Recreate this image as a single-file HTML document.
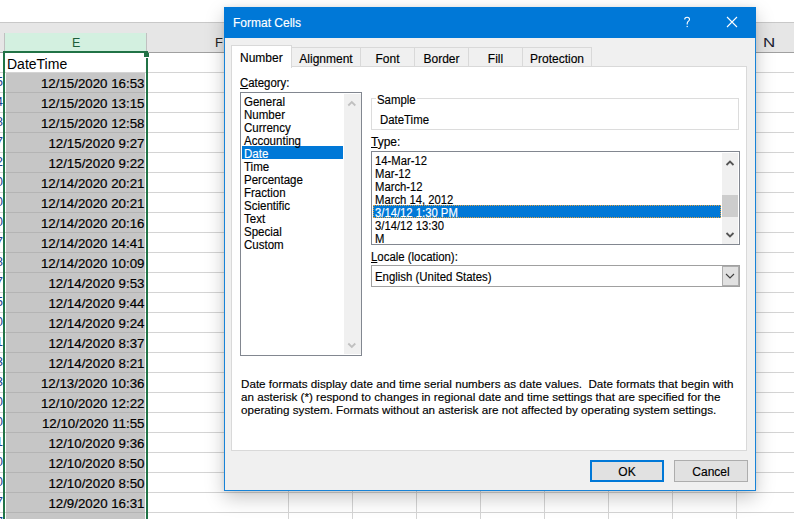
<!DOCTYPE html>
<html><head><meta charset="utf-8">
<style>
*{margin:0;padding:0;box-sizing:border-box}
html,body{width:794px;height:519px;overflow:hidden;background:#fff;font-family:"Liberation Sans",sans-serif;position:relative}
.a{position:absolute}
.hl{position:absolute;left:0;width:794px;height:1px;background:#d4d4d4}
.vl{position:absolute;top:52px;height:467px;width:1px;background:#d4d4d4}
.cell{position:absolute;left:6px;width:139px;height:19px;background:#c6c6c6}
.dt{position:absolute;right:649.5px;font-size:13.3px;color:#000;-webkit-text-stroke:0.2px #000;white-space:nowrap;line-height:15px}
.dd{position:absolute;font-size:13px;color:#1a3f8f;white-space:nowrap;right:791px;line-height:15px}
.tab{position:absolute;top:47px;height:20px;background:#f0f0f0;border:1px solid #d9d9d9;font-size:12px;line-height:22px;text-align:center;color:#000;-webkit-text-stroke:0.15px #000}
.sx{transform:scaleX(.95);transform-origin:0 0}
.ui{font-size:12px;color:#000;-webkit-text-stroke:0.15px currentColor;white-space:nowrap;line-height:13px}
</style></head><body>
<!-- top ribbon area -->
<div class="a" style="left:0;top:22px;width:794px;height:1px;background:#c8c8c8"></div>
<div class="a" style="left:0;top:23px;width:794px;height:29px;background:#e6e6e6"></div>
<div class="a" style="left:5px;top:33px;width:141px;height:18px;background:#d3f0e0"></div>
<div class="a" style="left:4px;top:33px;width:1px;height:18px;background:#c0c0c0"></div>
<div class="a" style="left:146px;top:33px;width:1px;height:18px;background:#c0c0c0"></div>
<div class="a" style="left:0;top:52px;width:794px;height:1px;background:#a0a0a0"></div>
<div class="a" style="left:72px;top:36px;font-size:12.5px;color:#1d5e3a;line-height:15px">E</div>
<div class="a" style="left:215px;top:35px;font-size:13px;color:#222;line-height:15px">F</div>
<div class="a" style="left:763px;top:35px;font-size:13.5px;color:#1c1c30;line-height:15px;transform:scaleX(1.25);transform-origin:0 0">N</div>
<!-- grid -->
<div class="hl" style="top:72px"></div>
<div class="hl" style="top:92px"></div>
<div class="hl" style="top:112px"></div>
<div class="hl" style="top:132px"></div>
<div class="hl" style="top:152px"></div>
<div class="hl" style="top:172px"></div>
<div class="hl" style="top:192px"></div>
<div class="hl" style="top:212px"></div>
<div class="hl" style="top:232px"></div>
<div class="hl" style="top:252px"></div>
<div class="hl" style="top:272px"></div>
<div class="hl" style="top:292px"></div>
<div class="hl" style="top:312px"></div>
<div class="hl" style="top:332px"></div>
<div class="hl" style="top:352px"></div>
<div class="hl" style="top:372px"></div>
<div class="hl" style="top:392px"></div>
<div class="hl" style="top:412px"></div>
<div class="hl" style="top:432px"></div>
<div class="hl" style="top:452px"></div>
<div class="hl" style="top:472px"></div>
<div class="hl" style="top:492px"></div>
<div class="hl" style="top:512px"></div>
<div class="vl" style="left:288px"></div>
<div class="vl" style="left:352px"></div>
<div class="vl" style="left:416px"></div>
<div class="vl" style="left:480px"></div>
<div class="vl" style="left:544px"></div>
<div class="vl" style="left:608px"></div>
<div class="vl" style="left:672px"></div>
<div class="vl" style="left:736px"></div>
<div class="cell" style="top:73px"></div><div class="a" style="left:6px;width:139px;height:1px;background:#b4b4b4;top:92px"></div><div class="dt" style="top:76px">12/15/2020 16:53</div><div class="dd" style="top:74px">5</div>
<div class="cell" style="top:93px"></div><div class="a" style="left:6px;width:139px;height:1px;background:#b4b4b4;top:112px"></div><div class="dt" style="top:96px">12/15/2020 13:15</div><div class="dd" style="top:94px">4</div>
<div class="cell" style="top:113px"></div><div class="a" style="left:6px;width:139px;height:1px;background:#b4b4b4;top:132px"></div><div class="dt" style="top:116px">12/15/2020 12:58</div><div class="dd" style="top:114px">8</div>
<div class="cell" style="top:133px"></div><div class="a" style="left:6px;width:139px;height:1px;background:#b4b4b4;top:152px"></div><div class="dt" style="top:136px">12/15/2020 9:27</div><div class="dd" style="top:134px">7</div>
<div class="cell" style="top:153px"></div><div class="a" style="left:6px;width:139px;height:1px;background:#b4b4b4;top:172px"></div><div class="dt" style="top:156px">12/15/2020 9:22</div><div class="dd" style="top:154px">2</div>
<div class="cell" style="top:173px"></div><div class="a" style="left:6px;width:139px;height:1px;background:#b4b4b4;top:192px"></div><div class="dt" style="top:176px">12/14/2020 20:21</div><div class="dd" style="top:174px">0</div>
<div class="cell" style="top:193px"></div><div class="a" style="left:6px;width:139px;height:1px;background:#b4b4b4;top:212px"></div><div class="dt" style="top:196px">12/14/2020 20:21</div><div class="dd" style="top:194px">0</div>
<div class="cell" style="top:213px"></div><div class="a" style="left:6px;width:139px;height:1px;background:#b4b4b4;top:232px"></div><div class="dt" style="top:216px">12/14/2020 20:16</div><div class="dd" style="top:214px">0</div>
<div class="cell" style="top:233px"></div><div class="a" style="left:6px;width:139px;height:1px;background:#b4b4b4;top:252px"></div><div class="dt" style="top:236px">12/14/2020 14:41</div><div class="dd" style="top:234px">7</div>
<div class="cell" style="top:253px"></div><div class="a" style="left:6px;width:139px;height:1px;background:#b4b4b4;top:272px"></div><div class="dt" style="top:256px">12/14/2020 10:09</div><div class="dd" style="top:254px">8</div>
<div class="cell" style="top:273px"></div><div class="a" style="left:6px;width:139px;height:1px;background:#b4b4b4;top:292px"></div><div class="dt" style="top:276px">12/14/2020 9:53</div><div class="dd" style="top:274px">7</div>
<div class="cell" style="top:293px"></div><div class="a" style="left:6px;width:139px;height:1px;background:#b4b4b4;top:312px"></div><div class="dt" style="top:296px">12/14/2020 9:44</div><div class="dd" style="top:294px">5</div>
<div class="cell" style="top:313px"></div><div class="a" style="left:6px;width:139px;height:1px;background:#b4b4b4;top:332px"></div><div class="dt" style="top:316px">12/14/2020 9:24</div><div class="dd" style="top:314px">0</div>
<div class="cell" style="top:333px"></div><div class="a" style="left:6px;width:139px;height:1px;background:#b4b4b4;top:352px"></div><div class="dt" style="top:336px">12/14/2020 8:37</div><div class="dd" style="top:334px">1</div>
<div class="cell" style="top:353px"></div><div class="a" style="left:6px;width:139px;height:1px;background:#b4b4b4;top:372px"></div><div class="dt" style="top:356px">12/14/2020 8:21</div><div class="dd" style="top:354px">3</div>
<div class="cell" style="top:373px"></div><div class="a" style="left:6px;width:139px;height:1px;background:#b4b4b4;top:392px"></div><div class="dt" style="top:376px">12/13/2020 10:36</div><div class="dd" style="top:374px">3</div>
<div class="cell" style="top:393px"></div><div class="a" style="left:6px;width:139px;height:1px;background:#b4b4b4;top:412px"></div><div class="dt" style="top:396px">12/10/2020 12:22</div><div class="dd" style="top:394px">0</div>
<div class="cell" style="top:413px"></div><div class="a" style="left:6px;width:139px;height:1px;background:#b4b4b4;top:432px"></div><div class="dt" style="top:416px">12/10/2020 11:55</div><div class="dd" style="top:414px">0</div>
<div class="cell" style="top:433px"></div><div class="a" style="left:6px;width:139px;height:1px;background:#b4b4b4;top:452px"></div><div class="dt" style="top:436px">12/10/2020 9:36</div><div class="dd" style="top:434px">1</div>
<div class="cell" style="top:453px"></div><div class="a" style="left:6px;width:139px;height:1px;background:#b4b4b4;top:472px"></div><div class="dt" style="top:456px">12/10/2020 8:50</div><div class="dd" style="top:454px">0</div>
<div class="cell" style="top:473px"></div><div class="a" style="left:6px;width:139px;height:1px;background:#b4b4b4;top:492px"></div><div class="dt" style="top:476px">12/10/2020 8:50</div><div class="dd" style="top:474px">0</div>
<div class="cell" style="top:493px"></div><div class="a" style="left:6px;width:139px;height:1px;background:#b4b4b4;top:512px"></div><div class="dt" style="top:496px">12/9/2020 16:31</div><div class="dd" style="top:494px">7</div>
<div class="cell" style="top:513px"></div><div class="a" style="left:6px;width:139px;height:1px;background:#b4b4b4;top:532px"></div><div class="dt" style="top:516px">12/9/2020 16:31</div><div class="dd" style="top:514px">7</div>

<!-- active cell -->
<div class="a" style="left:5px;top:53px;width:140px;height:19px;background:#fff"></div>
<div class="a" style="left:7px;top:56px;font-size:14px;line-height:16px;color:#000">DateTime</div>
<!-- selection border -->
<div class="a" style="left:3px;top:51px;width:2px;height:468px;background:#217346"></div>
<div class="a" style="left:3px;top:51px;width:145px;height:2px;background:#217346"></div>
<div class="a" style="left:146px;top:58px;width:2px;height:461px;background:#217346"></div>
<div class="a" style="left:145px;top:57px;width:4px;height:1px;background:#fff"></div><div class="a" style="left:144px;top:53px;width:5px;height:4px;background:#217346"></div>


<!-- dialog -->
<div class="a" style="left:224px;top:7px;width:532px;height:484px;background:#f0f0f0;border:1px solid #1883d7;box-shadow:0 7px 18px rgba(0,0,0,0.22),0 0 5px rgba(0,0,0,0.08)">
</div>
<div class="a" style="left:224px;top:7px;width:532px;height:31px;background:#0078d7"></div>
<div class="a ui" style="left:233px;top:17px;color:#fff;font-size:12px">Format Cells</div>
<!-- tabs -->
<div class="a" style="left:231px;top:66px;width:516px;height:385px;background:#fff;border:1px solid #d9d9d9"></div>
<div class="a tab" style="left:291px;width:70px">Alignment</div>
<div class="a tab" style="left:360px;width:55px">Font</div>
<div class="a tab" style="left:414px;width:55px">Border</div>
<div class="a tab" style="left:468px;width:55px">Fill</div>
<div class="a tab" style="left:522px;width:70px">Protection</div>
<div class="a" style="left:231px;top:45px;width:61px;height:23px;background:#fff;border:1px solid #d9d9d9;border-bottom:none"></div>
<div class="a ui" style="left:240px;top:52px">Number</div>
<!-- category -->
<div class="a ui sx" style="left:240px;top:77px"><u>C</u>ategory:</div>
<div class="a" style="left:240px;top:92px;width:122px;height:264px;background:#fff;border:1px solid #828790"></div>
<div class="a" style="left:344px;top:94px;width:17px;height:260px;background:#f0f0f0"></div>
<div class="a" style="left:242px;top:146px;width:101px;height:13px;background:#0078d7"></div>
<div class="a ui" style="left:244px;top:96px;line-height:13px;transform:scaleX(.96);transform-origin:0 0">General<br>Number<br>Currency<br>Accounting<br><span style="color:#fff">Date</span><br>Time<br>Percentage<br>Fraction<br>Scientific<br>Text<br>Special<br>Custom</div>
<!-- sample -->
<div class="a" style="left:371px;top:98px;width:368px;height:32px;border:1px solid #dcdcdc"></div>
<div class="a ui sx" style="left:376px;top:94px;background:#fff;padding:0 1px">Sample</div>
<div class="a ui sx" style="left:380px;top:114px">DateTime</div>
<!-- type -->
<div class="a ui" style="left:371px;top:136px"><u>T</u>ype:</div>
<div class="a" style="left:371px;top:151px;width:369px;height:94px;background:#fff;border:1px solid #828790"></div>
<div class="a" style="left:722px;top:153px;width:16px;height:91px;background:#f0f0f0"></div>
<div class="a" style="left:722px;top:195px;width:16px;height:22px;background:#cdcdcd"></div>
<div class="a" style="left:373px;top:205px;width:348px;height:13px;background:#0078d7;outline:1px dotted #e0a040;outline-offset:-1px"></div>
<div class="a ui" style="left:375px;top:155px;line-height:13px;transform:scaleX(0.94);transform-origin:0 0">14-Mar-12<br>Mar-12<br>March-12<br>March 14, 2012<br><span style="color:#fff">3/14/12 1:30 PM</span><br>3/14/12 13:30<br>M</div>
<!-- locale -->
<div class="a ui sx" style="left:371px;top:251px"><u>L</u>ocale (location):</div>
<div class="a" style="left:371px;top:265px;width:369px;height:22px;background:#fff;border:1px solid #a0a0a0"></div>
<div class="a" style="left:722px;top:266px;width:17px;height:20px;background:#e1e1e1;border:1px solid #adadad"></div>
<div class="a ui sx" style="left:375px;top:271px">English (United States)</div>
<!-- description -->
<div class="a ui" style="left:241px;top:377px;line-height:13px;font-size:11.65px">Date formats display date and time serial numbers as date values.&nbsp; Date formats that begin with<br>an asterisk (*) respond to changes in regional date and time settings that are specified for the<br>operating system. Formats without an asterisk are not affected by operating system settings.</div>
<!-- buttons -->
<div class="a" style="left:590px;top:460px;width:74px;height:22px;background:#e1e1e1;border:2px solid #0078d7"></div>
<div class="a ui" style="left:590px;top:466px;width:74px;text-align:center">OK</div>
<div class="a" style="left:674px;top:460px;width:74px;height:22px;background:#e1e1e1;border:1px solid #adadad"></div>
<div class="a ui" style="left:674px;top:466px;width:74px;text-align:center">Cancel</div>


<!-- title icons -->
<svg class="a" style="left:680px;top:12px" width="14" height="18" viewBox="0 0 14 18"><path d="M4.7 7.4 C4.7 5.9 5.7 5.3 7.1 5.3 C8.6 5.3 9.5 6.1 9.5 7.4 C9.5 9.1 7.2 9.4 7.2 11.4 V12.6" fill="none" stroke="#fff" stroke-width="1.1"/><rect x="6.6" y="13.9" width="1.2" height="1.2" fill="#fff"/></svg>
<svg class="a" style="left:726px;top:16px" width="12" height="12" viewBox="0 0 12 12"><path d="M1 1 L11 11 M11 1 L1 11" stroke="#fff" stroke-width="1.1"/></svg>
<!-- category scroll arrows -->
<svg class="a" style="left:347px;top:100px" width="10" height="8" viewBox="0 0 10 8"><path d="M1.3 5.5 L4.8 2 L8.3 5.5" fill="none" stroke="#c0c0c0" stroke-width="1.8"/></svg>
<svg class="a" style="left:347px;top:341px" width="10" height="8" viewBox="0 0 10 8"><path d="M1.3 2.5 L4.8 6 L8.3 2.5" fill="none" stroke="#c0c0c0" stroke-width="1.8"/></svg>
<!-- type scroll arrows -->
<svg class="a" style="left:725px;top:159px" width="10" height="8" viewBox="0 0 10 8"><path d="M1.5 6 L5 2.5 L8.5 6" fill="none" stroke="#555" stroke-width="1.8"/></svg>
<svg class="a" style="left:725px;top:231px" width="10" height="8" viewBox="0 0 10 8"><path d="M1.5 2 L5 5.5 L8.5 2" fill="none" stroke="#555" stroke-width="1.8"/></svg>
<!-- combo chevron -->
<svg class="a" style="left:725px;top:272px" width="10" height="8" viewBox="0 0 10 8"><path d="M1 2 L5 6 L9 2" fill="none" stroke="#404040" stroke-width="1.1"/></svg>
</body></html>
